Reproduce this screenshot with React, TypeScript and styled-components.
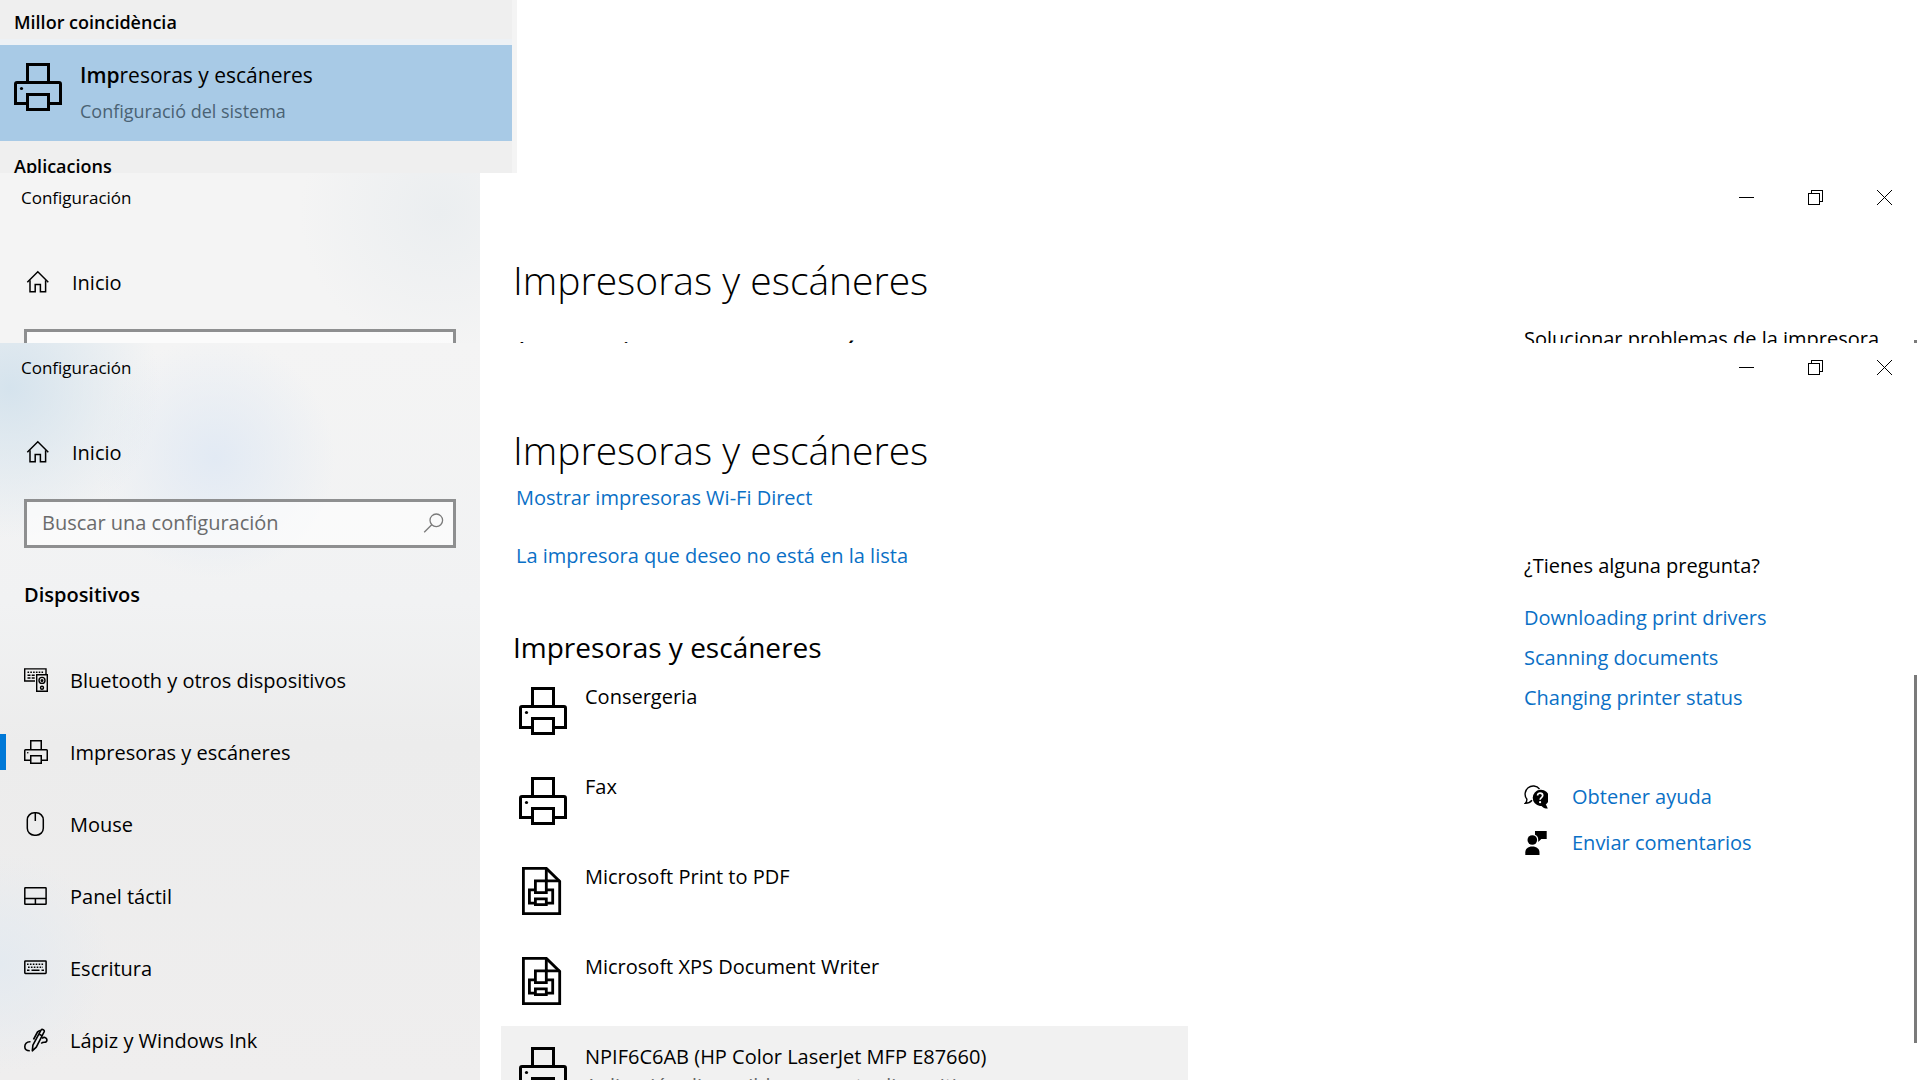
import React from "react";
import styled, { createGlobalStyle, css } from "styled-components";

const GlobalStyle = createGlobalStyle`
  *, *::before, *::after { box-sizing: border-box; }
  html, body { margin: 0; background: #fff; }
  body {
    font-family: "Open Sans", "Noto Sans", sans-serif;
    font-size: 20px;
    line-height: 28px;
    color: #000;
  }
  h1, h2, h3, p, ul { margin: 0; padding: 0; font-weight: 400; }
  ul { list-style: none; }
  button, input { font: inherit; color: inherit; }
`;

/* ---------- Icons ---------- */

const Svg = styled.svg<{ $size: number }>`
  display: block;
  flex: none;
  width: ${(p) => p.$size}px;
  height: ${(p) => p.$size}px;
  fill: none;
  stroke: currentColor;
`;

const PrinterIcon = ({ size = 48 }: { size?: number }) => (
  <Svg $size={size} viewBox="0 0 48 48" strokeWidth={3} aria-hidden>
    <path d="M13.5 19.5v-18h21v18" />
    <path d="M13.5 40.5h-12V21q0-1.5 1.5-1.5h42q1.5 0 1.5 1.5v19.5h-12" />
    <path d="M13.5 31.5h21v15h-21z" />
    <circle cx="7.5" cy="25.5" r="1.6" fill="currentColor" stroke="none" />
  </Svg>
);

const DocumentPrinterIcon = () => (
  <Svg $size={48} viewBox="0 0 48 48" strokeWidth={2.8} aria-hidden>
    <path d="M4.4 1.4h23l13.3 13v32.2H4.4z" />
    <path d="M27.3 1.4v12.4h13.4" />
    <path d="M16.4 13.8h10.900v11.800H16.4z" />
    <path d="M16.4 22.800h-6v13.400h6M27.3 22.800h6.400v13.400h-6.400" />
    <path d="M16.4 31.800h10.900v5.800H16.4z" />
  </Svg>
);

const HomeIcon = () => (
  <Svg $size={24} viewBox="0 0 24 24" strokeWidth={1.5} aria-hidden>
    <path d="M1.3 12.3 11.8 1.7l10.5 10.6" />
    <path d="M4 10.2v11.6h5.2v-7.3h5.2v7.3h5.2V10.2" />
  </Svg>
);

const DevicesIcon = () => (
  <Svg $size={24} viewBox="0 0 24 24" strokeWidth={1.4} aria-hidden>
    <path d="M11 13H.7V.9H22V6" />
    <path d="M3.5 4.3h16" strokeWidth={1.6} strokeDasharray="1.6 1.2" />
    <path d="M3.5 7.3h7.5M3.5 10h7.5" strokeWidth={1.5} strokeDasharray="3 1.2" />
    <path d="M12.7 6.7h10.6v16.6H12.7z" />
    <circle cx="18" cy="12.4" r="3" />
    <circle cx="18" cy="12.4" r=".8" />
    <circle cx="18" cy="19.7" r="1.5" />
  </Svg>
);

const MouseIcon = () => (
  <Svg $size={24} viewBox="0 0 24 24" strokeWidth={1.5} aria-hidden>
    <rect x="3.3" y=".8" width="16" height="22.4" rx="7" />
    <path d="M11.3.8v8.2" />
  </Svg>
);

const TouchpadIcon = () => (
  <Svg $size={24} viewBox="0 0 24 24" strokeWidth={1.5} aria-hidden>
    <rect x=".8" y="3.7" width="21.3" height="16.6" rx=".6" />
    <path d="M.8 14.5h21.3M11.4 14.5v5.8" />
  </Svg>
);

const KeyboardIcon = () => (
  <Svg $size={24} viewBox="0 0 24 24" strokeWidth={1.5} aria-hidden>
    <rect x=".8" y="5" width="21.3" height="12.4" rx=".6" />
    <path d="M3 8.3h17M4 11.2h15" strokeDasharray="1.6 1.3" />
    <path d="M3 14.2h2.5M7.5 14.2h8M17.5 14.2H20" />
  </Svg>
);

const PenIcon = () => (
  <Svg $size={24} viewBox="0 0 24 24" strokeWidth={1.6} strokeLinejoin="round" aria-hidden>
    <path d="M6.5 13.8C2.3 13.5.8 16.5.8 18.8c0 2.700 2.200 4 5 4" />
    <path d="m8.3 22.8.6-5.600L17 2.200c1-1.700 4-.2 3.100 1.700l-7.800 15.300z" />
    <path d="M16 2.300 13.500 4l-4 7.500M15.300 6.300l3 1.600" />
    <path d="M18 10.300c1.200-.9 2-1.100 3-.8 2.900 1 2.300 4.800-.6 4.800-1.300 0-2.400.3-3.200 1.200" />
  </Svg>
);

const SearchIcon = () => (
  <Svg $size={24} viewBox="0 0 24 24" strokeWidth={1.3} aria-hidden>
    <circle cx="14.3" cy="9.3" r="6.3" />
    <path d="M9.7 13.8 2.2 21.3" />
  </Svg>
);

const HelpIcon = () => (
  <Svg $size={24} viewBox="0 0 24 24" strokeWidth={1.4} aria-hidden>
    <path d="M8 15.200c-1.600 2-3.800 3-6.600 3 1-1 1.500-2.200 1.500-4A7.600 7.600 0 1 1 15.500 4" />
    <path
      d="M16 4.700a8.200 8.200 0 1 1 0 16.300 8.200 8.200 0 0 1 0-16.300zM21.500 18.500l2.300 5c-3 0-5-1-6.300-2.600z"
      fill="currentColor"
      stroke="none"
    />
    <path d="M13.600 10.500c0-3.200 5.100-3.100 5.100 0 0 2-2.600 2.100-2.600 4.300" stroke="#fff" strokeWidth={1.7} />
    <circle cx="16.1" cy="17.2" r="1.1" fill="#fff" stroke="none" />
  </Svg>
);

const FeedbackIcon = () => (
  <Svg $size={24} viewBox="0 0 24 24" aria-hidden>
    <g fill="currentColor" stroke="none">
      <circle cx="8.3" cy="9" r="4.8" />
      <path d="M1.3 24v-2.500c0-3.500 2.500-6 7-6s7.200 2.500 7.200 6V24z" />
      <path d="M11 0h11.700v8h-5.400l-3.100 2.900V8c0-1.600-1.200-3.600-3.200-4.300z" />
    </g>
  </Svg>
);

/* ---------- Start menu search results ---------- */

const Page = styled.div`
  display: flex;
  flex-direction: column;
  height: 100vh;
  overflow: hidden;
`;

const SearchPanel = styled.section`
  flex: none;
  width: 517px;
  height: 173px;
  padding-top: 10px;
  overflow: hidden;
  background: #efefef;
  border-right: 5px solid #f4f4f4;
`;

const ResultHeading = styled.h3`
  padding-left: 14px;
  font-size: 18px;
  font-weight: 600;
  line-height: 24px;
`;

const BestMatch = styled.button`
  display: flex;
  align-items: flex-start;
  gap: 18px;
  width: 100%;
  height: 102px;
  margin: 5px 0 13px;
  padding: 18px 14px 0;
  border: 0;
  border-top: 6px solid #edf1f5;
  background: #a8cae6;
  text-align: left;
`;

const MatchText = styled.span`
  display: flex;
  flex-direction: column;
  gap: 8px;
  margin-top: -2px;
`;

const MatchTitle = styled.span`
  font-size: 21px;
  b { font-weight: 600; }
`;

const MatchCaption = styled.span`
  font-size: 18px;
  color: #4a6274;
`;

/* ---------- Settings window ---------- */

const Window = styled.section<{ $peek?: boolean }>`
  display: flex;
  min-height: 0;
  overflow: hidden;
  background: #fff;
  ${(p) => (p.$peek ? css`flex: 0 0 170px;` : css`flex: 1;`)}
`;

const Sidebar = styled.nav<{ $peek?: boolean }>`
  flex: 0 0 480px;
  background: ${(p) =>
    p.$peek
      ? "radial-gradient(circle at 440px 40px, #ebeef0 0, rgba(241,242,243,0) 140px), #f4f4f4"
      : `radial-gradient(circle at 10px 45px, #d5e3ed 0, rgba(228,235,241,0) 150px),
         radial-gradient(circle at 215px 115px, #e2eaf4 0, rgba(236,240,245,0) 120px),
         radial-gradient(circle at 0 620px, #e4eaf0 0, rgba(237,239,241,0) 110px),
         linear-gradient(180deg, #f4f4f4 0, #f1f2f3 260px, #ececec 400px, #efeeee 100%)`};
`;

const AppName = styled.p`
  padding: 1px 0 0 21px;
  font-size: 17px;
  line-height: 47px;
`;

const HomeLink = styled.a`
  display: flex;
  align-items: center;
  height: 48px;
  margin-top: 37px;
  padding-left: 26px;
  color: inherit;
  text-decoration: none;
`;

const SearchBox = styled.label`
  display: flex;
  align-items: center;
  height: 49px;
  margin: 23px 24px 0;
  padding: 0 7px 2px 15px;
  border: 3px solid #8e8f90;
  background: rgba(255, 255, 255, 0.6);
  color: #7a7a7a;
`;

const SearchInput = styled.input`
  flex: 1;
  min-width: 0;
  padding: 0;
  border: 0;
  outline: 0;
  background: transparent;
  &::placeholder { color: #6a6b6c; opacity: 1; }
`;

const SectionName = styled.h3`
  margin: 33px 0 35px;
  padding-left: 24px;
  font-size: 20px;
  font-weight: 600;
`;

const NavLink = styled.a`
  display: flex;
  align-items: center;
  height: 72px;
  color: inherit;
  text-decoration: none;
`;

const Marker = styled.span<{ $on: boolean }>`
  width: 6px;
  height: 36px;
  margin-right: 18px;
  background: ${(p) => (p.$on ? "#0078d7" : "transparent")};
`;

const NavLabel = styled.span`
  padding: 2px 0 0 22px;
`;

const Main = styled.main`
  flex: 1;
  min-width: 0;
  display: flex;
  flex-direction: column;
`;

const Controls = styled.div`
  flex: none;
  display: flex;
  justify-content: flex-end;
  padding-right: 1px;
`;

const ControlButton = styled.button`
  display: grid;
  place-items: center;
  width: 69px;
  height: 48px;
  padding: 0;
  border: 0;
  background: none;
`;

const Body = styled.div`
  display: flex;
  flex: 1;
  min-height: 0;
`;

const Content = styled.div`
  flex: 1;
  min-width: 0;
`;

const Title = styled.h1`
  margin-top: 33px;
  padding-left: 33px;
  font-size: 39px;
  font-weight: 300;
  line-height: 52px;
`;

const Heading = styled.h2<{ $top: number }>`
  margin-top: ${(p) => p.$top}px;
  padding-left: 33px;
  font-size: 28px;
  line-height: 38px;
`;

const Link = styled.a`
  color: #0a70c6;
  text-decoration: none;
`;

const ActionLinks = styled.div`
  display: flex;
  flex-direction: column;
  align-items: flex-start;
  gap: 30px;
  margin-top: 8px;
  padding-left: 36px;
`;

const PrinterRow = styled.li<{ $selected?: boolean }>`
  display: flex;
  gap: 18px;
  height: ${(p) => (p.$selected ? 150 : 90)}px;
  max-width: 687px;
  margin-left: 21px;
  padding: 21px 18px 0;
  background: ${(p) => (p.$selected ? "#f1f1f1" : "transparent")};
`;

const PrinterText = styled.div`
  display: flex;
  flex-direction: column;
  gap: 1px;
  margin-top: -4px;
`;

const PrinterStatus = styled.p`
  color: #666;
`;

const Aside = styled.aside<{ $top: number }>`
  flex: 0 0 390px;
  padding-top: ${(p) => p.$top}px;
`;

const HelpLinks = styled.div`
  display: flex;
  flex-direction: column;
  align-items: flex-start;
  gap: 12px;
  margin: 24px 0 71px;
`;

const SupportLinks = styled.div`
  display: flex;
  flex-direction: column;
  gap: 18px;
`;

const SupportRow = styled.div`
  display: flex;
  align-items: center;
  gap: 24px;
`;

const Scrollbar = styled.div<{ $top: number }>`
  flex: 0 0 6px;
  padding-top: ${(p) => p.$top}px;
`;

const Thumb = styled.div`
  width: 3px;
  height: 368px;
  background: #7a7a7a;
`;

const WindowControls = () => (
  <Controls>
    <ControlButton aria-label="Minimizar">
      <Svg $size={15} viewBox="0 0 15 15" shapeRendering="crispEdges"><path d="M0 7.5h15" /></Svg>
    </ControlButton>
    <ControlButton aria-label="Restaurar">
      <Svg $size={15} viewBox="0 0 15 15" shapeRendering="crispEdges">
        <path d="M.5 3.5h11v11H.5zM3.5 3.5v-3h11v11h-3" />
      </Svg>
    </ControlButton>
    <ControlButton aria-label="Cerrar">
      <Svg $size={15} viewBox="0 0 15 15"><path d="m0 0 15 15M15 0 0 15" /></Svg>
    </ControlButton>
  </Controls>
);

const SidebarTop = () => (
  <>
    <AppName>Configuración</AppName>
    <HomeLink href="#inicio"><HomeIcon /><NavLabel>Inicio</NavLabel></HomeLink>
  </>
);

const navItems = [
  { label: "Bluetooth y otros dispositivos", icon: <DevicesIcon /> },
  { label: "Impresoras y escáneres", icon: <PrinterIcon size={24} />, active: true },
  { label: "Mouse", icon: <MouseIcon /> },
  { label: "Panel táctil", icon: <TouchpadIcon /> },
  { label: "Escritura", icon: <KeyboardIcon /> },
  { label: "Lápiz y Windows Ink", icon: <PenIcon /> },
];

const printers = [
  { name: "Consergeria", icon: <PrinterIcon /> },
  { name: "Fax", icon: <PrinterIcon /> },
  { name: "Microsoft Print to PDF", icon: <DocumentPrinterIcon /> },
  { name: "Microsoft XPS Document Writer", icon: <DocumentPrinterIcon /> },
  {
    name: "NPIF6C6AB (HP Color LaserJet MFP E87660)",
    icon: <PrinterIcon />,
    status: "Aplicación disponible para este dispositivo",
  },
];

const helpTopics = ["Downloading print drivers", "Scanning documents", "Changing printer status"];

export default function App() {
  return (
    <Page>
      <GlobalStyle />
      <SearchPanel>
        <ResultHeading>Millor coincidència</ResultHeading>
        <BestMatch>
          <PrinterIcon />
          <MatchText>
            <MatchTitle><b>Imp</b>resoras y escáneres</MatchTitle>
            <MatchCaption>Configuració del sistema</MatchCaption>
          </MatchText>
        </BestMatch>
        <ResultHeading>Aplicacions</ResultHeading>
      </SearchPanel>

      <Window $peek>
        <Sidebar $peek>
          <SidebarTop />
          <SearchBox>
            <SearchInput aria-label="Buscar" />
          </SearchBox>
        </Sidebar>
        <Main>
          <WindowControls />
          <Body>
            <Content>
              <Title>Impresoras y escáneres</Title>
              <Heading $top={26}>Agregar impresoras y escáneres</Heading>
            </Content>
            <Aside $top={104}>
              <p>Solucionar problemas de la impresora</p>
            </Aside>
            <Scrollbar $top={119}><Thumb /></Scrollbar>
          </Body>
        </Main>
      </Window>

      <Window>
        <Sidebar>
          <SidebarTop />
          <SearchBox>
            <SearchInput type="text" aria-label="Buscar una configuración" placeholder="Buscar una configuración" />
            <SearchIcon />
          </SearchBox>
          <SectionName>Dispositivos</SectionName>
          <ul>
            {navItems.map((item) => (
              <li key={item.label}>
                <NavLink href="#dispositivos" aria-current={item.active ? "page" : undefined}>
                  <Marker $on={!!item.active} />
                  {item.icon}
                  <NavLabel>{item.label}</NavLabel>
                </NavLink>
              </li>
            ))}
          </ul>
        </Sidebar>
        <Main>
          <WindowControls />
          <Body>
            <Content>
              <Title>Impresoras y escáneres</Title>
              <ActionLinks>
                <Link href="#wifi-direct">Mostrar impresoras Wi-Fi Direct</Link>
                <Link href="#manual">La impresora que deseo no está en la lista</Link>
              </ActionLinks>
              <Heading $top={58}>Impresoras y escáneres</Heading>
              <ul>
                {printers.map((printer) => (
                  <PrinterRow key={printer.name} $selected={!!printer.status}>
                    {printer.icon}
                    <PrinterText>
                      <p>{printer.name}</p>
                      {printer.status && <PrinterStatus>{printer.status}</PrinterStatus>}
                    </PrinterText>
                  </PrinterRow>
                ))}
              </ul>
            </Content>
            <Aside $top={161}>
              <p>¿Tienes alguna pregunta?</p>
              <HelpLinks>
                {helpTopics.map((topic) => (
                  <Link key={topic} href="#ayuda">{topic}</Link>
                ))}
              </HelpLinks>
              <SupportLinks>
                <SupportRow><HelpIcon /><Link href="#obtener-ayuda">Obtener ayuda</Link></SupportRow>
                <SupportRow><FeedbackIcon /><Link href="#comentarios">Enviar comentarios</Link></SupportRow>
              </SupportLinks>
            </Aside>
            <Scrollbar $top={284}><Thumb /></Scrollbar>
          </Body>
        </Main>
      </Window>
    </Page>
  );
}
